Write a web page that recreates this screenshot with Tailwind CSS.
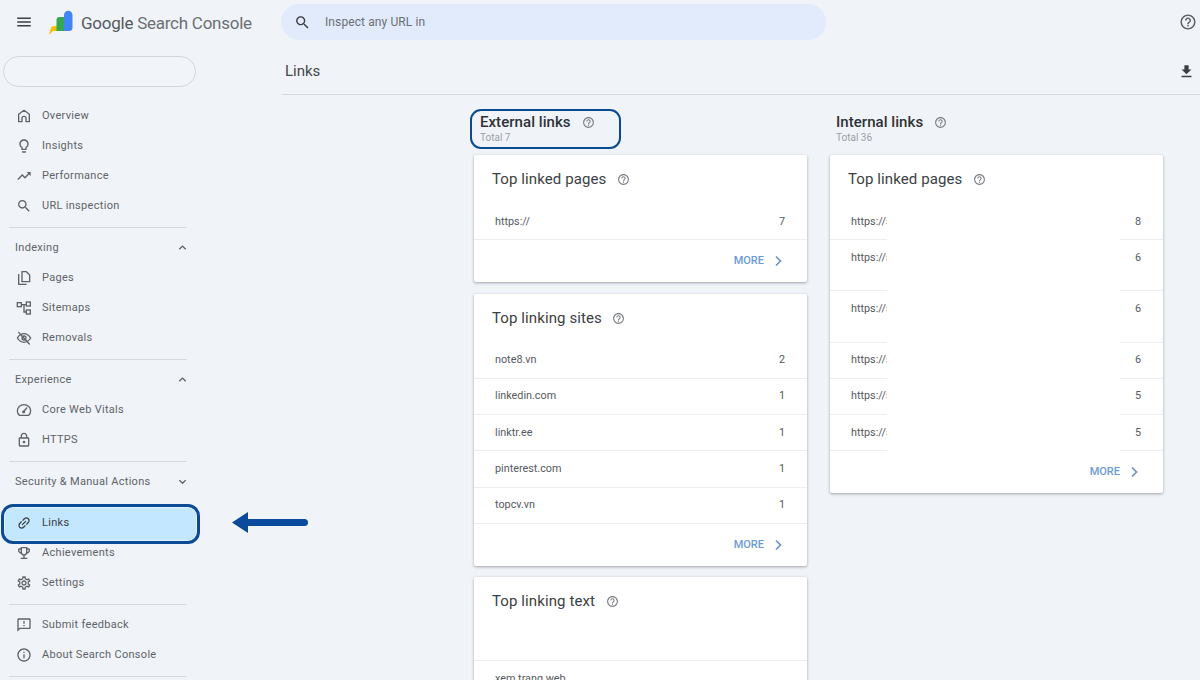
<!DOCTYPE html>
<html lang="en">
<head>
<meta charset="utf-8">
<title>Links - Google Search Console</title>
<script src="https://cdn.jsdelivr.net/npm/@tailwindcss/browser@4"></script>
</head>
<body class="m-0">
<svg width="0" height="0" class="absolute">
  <defs>
    <symbol id="i-menu" viewBox="0 0 24 24"><path fill="currentColor" d="M3 18h18v-2H3v2zm0-5h18v-2H3v2zm0-7v2h18V6H3z"/></symbol>
    <symbol id="i-search" viewBox="0 0 24 24"><path fill="currentColor" d="M15.5 14h-.79l-.28-.27C15.41 12.59 16 11.11 16 9.5 16 5.91 13.09 3 9.5 3S3 5.91 3 9.5 5.91 16 9.5 16c1.61 0 3.09-.59 4.23-1.57l.27.28v.79l5 4.99L20.49 19l-4.99-5zm-6 0C7.01 14 5 11.99 5 9.5S7.01 5 9.5 5 14 7.01 14 9.5 11.99 14 9.5 14z"/></symbol>
    <symbol id="i-help" viewBox="0 0 24 24"><path fill="currentColor" d="M11 18h2v-2h-2v2zm1-16C6.48 2 2 6.48 2 12s4.48 10 10 10 10-4.48 10-10S17.52 2 12 2zm0 18c-4.41 0-8-3.59-8-8s3.59-8 8-8 8 3.59 8 8-3.59 8-8 8zm0-14c-2.21 0-4 1.79-4 4h2c0-1.1.9-2 2-2s2 .9 2 2c0 2-3 1.75-3 5h2c0-2.25 3-2.5 3-5 0-2.21-1.79-4-4-4z"/></symbol>
    <symbol id="i-download" viewBox="0 0 24 24"><path fill="currentColor" d="M19 9h-4V3H9v6H5l7 7 7-7zM5 18v2h14v-2H5z"/></symbol>
    <symbol id="i-home" viewBox="0 0 24 24"><path fill="none" stroke="currentColor" stroke-width="2" stroke-linejoin="round" d="M12 3.5 4 9.5V20.5H9V15.5a3 3 0 0 1 6 0V20.5H20V9.5z"/></symbol>
    <symbol id="i-bulb" viewBox="0 0 24 24"><path fill="currentColor" d="M9 21c0 .55.45 1 1 1h4c.55 0 1-.45 1-1v-1H9v1zm3-19C8.14 2 5 5.14 5 9c0 2.38 1.19 4.47 3 5.74V17c0 .55.45 1 1 1h6c.55 0 1-.45 1-1v-2.26c1.81-1.27 3-3.36 3-5.74 0-3.86-3.14-7-7-7zm2.85 11.1l-.85.6V16h-4v-2.3l-.85-.6C7.8 12.16 7 10.63 7 9c0-2.76 2.24-5 5-5s5 2.24 5 5c0 1.63-.8 3.16-2.15 4.1z"/></symbol>
    <symbol id="i-trend" viewBox="0 0 24 24"><path fill="currentColor" d="M16 6l2.29 2.29-4.88 4.88-4-4L2 16.59 3.41 18l6-6 4 4 6.3-6.29L22 12V6z"/></symbol>
    <symbol id="i-pages" viewBox="0 0 24 24"><path fill="none" stroke="currentColor" stroke-width="2" stroke-linejoin="round" d="M4 6V21.5H16M9 2.5H15.5L20.5 7.5V17.5H9z"/></symbol>
    <symbol id="i-sitemap" viewBox="0 0 24 24"><g fill="none" stroke="currentColor" stroke-width="2"><rect x="2" y="4" width="6" height="6"/><rect x="15.5" y="3" width="6" height="6"/><rect x="15.5" y="15" width="6" height="6"/><path d="M8 7H15.5M12 7V18H15.5"/></g></symbol>
    <symbol id="i-eyeoff" viewBox="0 0 24 24"><g fill="none" stroke="currentColor" stroke-width="2" stroke-linecap="round"><path d="M2 12C5 7.5 8.5 5.5 12 5.5S19 7.5 22 12C19 16.5 15.5 18.5 12 18.5S5 16.5 2 12z"/><path d="M4 3.5 20 21"/><circle cx="12" cy="12" r="3"/></g></symbol>
    <symbol id="i-speed" viewBox="0 0 24 24"><g fill="none" stroke="currentColor" stroke-width="2" stroke-linecap="round"><path d="M5 20H19C21 18 22 15.5 22 13A10 9 0 0 0 12 4 10 9 0 0 0 2 13C2 15.5 3 18 5 20z"/><path d="M11 15 16 9"/><circle cx="11.5" cy="15" r="1.2"/></g></symbol>
    <symbol id="i-lock" viewBox="0 0 24 24"><path fill="currentColor" d="M18 8h-1V6c0-2.76-2.24-5-5-5S7 3.24 7 6v2H6c-1.1 0-2 .9-2 2v10c0 1.1.9 2 2 2h12c1.1 0 2-.9 2-2V10c0-1.1-.9-2-2-2zM9 6c0-1.66 1.34-3 3-3s3 1.34 3 3v2H9V6zm9 14H6V10h12v10zm-6-3c1.1 0 2-.9 2-2s-.9-2-2-2-2 .9-2 2 .9 2 2 2z"/></symbol>
    <symbol id="i-link" viewBox="0 0 24 24"><path fill="currentColor" transform="rotate(-45 12 12)" d="M3.9 12c0-1.71 1.39-3.1 3.1-3.1h4V7H7c-2.76 0-5 2.24-5 5s2.24 5 5 5h4v-1.9H7c-1.71 0-3.1-1.39-3.1-3.1zM8 13h8v-2H8v2zm9-6h-4v1.9h4c1.71 0 3.1 1.39 3.1 3.1s-1.39 3.1-3.1 3.1h-4V17h4c2.76 0 5-2.24 5-5s-2.24-5-5-5z"/></symbol>
    <symbol id="i-trophy" viewBox="0 0 24 24"><path fill="currentColor" d="M19 5h-2V3H7v2H5c-1.1 0-2 .9-2 2v1c0 2.55 1.92 4.63 4.39 4.94.63 1.5 1.98 2.63 3.61 2.96V19H7v2h10v-2h-4v-3.1c1.63-.33 2.98-1.46 3.61-2.96C19.08 12.63 21 10.55 21 8V7c0-1.1-.9-2-2-2zM5 8V7h2v3.82C5.84 10.4 5 9.3 5 8zm7 6c-1.65 0-3-1.35-3-3V5h6v6c0 1.65-1.35 3-3 3zm7-6c0 1.3-.84 2.4-2 2.82V7h2v1z"/></symbol>
    <symbol id="i-gear" viewBox="0 0 24 24"><path fill="currentColor" d="M19.43 12.98c.04-.32.07-.64.07-.98 0-.34-.03-.66-.07-.98l2.11-1.65c.19-.15.24-.42.12-.64l-2-3.46c-.09-.16-.26-.25-.44-.25-.06 0-.12.01-.17.03l-2.49 1c-.52-.4-1.08-.73-1.69-.98l-.38-2.65C14.46 2.18 14.25 2 14 2h-4c-.25 0-.46.18-.49.42l-.38 2.65c-.61.25-1.17.59-1.69.98l-2.49-1c-.06-.02-.12-.03-.18-.03-.17 0-.34.09-.43.25l-2 3.46c-.13.22-.07.49.12.64l2.11 1.65c-.04.32-.07.65-.07.98 0 .33.03.66.07.98l-2.11 1.65c-.19.15-.24.42-.12.64l2 3.46c.09.16.26.25.44.25.06 0 .12-.01.17-.03l2.49-1c.52.4 1.08.73 1.69.98l.38 2.65c.03.24.24.42.49.42h4c.25 0 .46-.18.49-.42l.38-2.65c.61-.25 1.17-.59 1.69-.98l2.49 1c.06.02.12.03.18.03.17 0 .34-.09.43-.25l2-3.46c.12-.22.07-.49-.12-.64l-2.11-1.65zm-1.98-1.71c.04.31.05.52.05.73 0 .21-.02.43-.05.73l-.14 1.13.89.7 1.08.84-.7 1.21-1.27-.51-1.04-.42-.9.68c-.43.32-.84.56-1.25.73l-1.06.43-.16 1.13-.2 1.35h-1.4l-.19-1.35-.16-1.13-1.06-.43c-.43-.18-.83-.41-1.23-.71l-.91-.7-1.06.43-1.27.51-.7-1.21 1.08-.84.89-.7-.14-1.13c-.03-.31-.05-.54-.05-.74s.02-.43.05-.73l.14-1.13-.89-.7-1.08-.84.7-1.21 1.27.51 1.04.42.9-.68c.43-.32.84-.56 1.25-.73l1.06-.43.16-1.13.2-1.35h1.39l.19 1.35.16 1.13 1.06.43c.43.18.83.41 1.23.71l.91.7 1.06-.43 1.27-.51.7 1.21-1.07.85-.89.7.14 1.13zM12 8c-2.21 0-4 1.79-4 4s1.79 4 4 4 4-1.79 4-4-1.79-4-4-4zm0 6c-1.1 0-2-.9-2-2s.9-2 2-2 2 .9 2 2-.9 2-2 2z"/></symbol>
    <symbol id="i-feedback" viewBox="0 0 24 24"><path fill="currentColor" d="M20 2H4c-1.1 0-1.99.9-1.99 2L2 22l4-4h14c1.1 0 2-.9 2-2V4c0-1.1-.9-2-2-2zm0 14H5.17L4 17.17V4h16v12zM11 12h2v2h-2zm0-6h2v4h-2z"/></symbol>
    <symbol id="i-info" viewBox="0 0 24 24"><path fill="currentColor" d="M11 7h2v2h-2zm0 4h2v6h-2zm1-9C6.48 2 2 6.48 2 12s4.48 10 10 10 10-4.48 10-10S17.52 2 12 2zm0 18c-4.41 0-8-3.59-8-8s3.59-8 8-8 8 3.59 8 8-3.59 8-8 8z"/></symbol>
    <symbol id="i-up" viewBox="0 0 24 24"><path fill="none" stroke="currentColor" stroke-width="3" d="M5 16 12 9 19 16"/></symbol>
    <symbol id="i-down" viewBox="0 0 24 24"><path fill="none" stroke="currentColor" stroke-width="3" d="M5 9 12 16 19 9"/></symbol>
    <symbol id="i-right" viewBox="0 0 24 24"><path fill="none" stroke="currentColor" stroke-width="3.4" d="M8 3 17 12 8 21"/></symbol>
  </defs>
</svg>

<div class="relative w-[1200px] h-[680px] overflow-hidden bg-[#f0f4f9] font-['Roboto',sans-serif] text-[#5f6368]">

  <!-- Top bar -->
  <header class="flex items-center h-[44px]">
    <div class="flex items-center w-[281px] shrink-0">
      <svg class="w-[18px] h-[18px] ml-[15px] text-[#3c4043]"><use href="#i-menu"/></svg>
      <svg class="w-[26px] h-[26px] ml-[15px] mt-[2px]" viewBox="0 0 26 26">
        <path fill="#fbbc04" d="M1 25 3 18a3 3 0 0 1 3-2H10V21H5z"/>
        <path fill="#34a853" d="M8.5 10a3 3 0 0 1 3-3H18V21H8.500z"/>
        <path fill="#4285f4" d="M16 5a4 4 0 0 1 8.500 0V17.500a3.500 3.500 0 0 1-3.500 3.500H16z"/>
      </svg>
      <span class="ml-[7px] mt-[3px] text-[17px] leading-none tracking-[-0.25px] text-[#6b6f74] whitespace-nowrap"><span class="text-[#55595e]">Google</span> Search Console</span>
    </div>
    <div class="flex items-center w-[545px] h-[36px] rounded-full bg-[#e1ebfb] pl-[13px]">
      <svg class="w-[17px] h-[17px] text-[#3c4043]"><use href="#i-search"/></svg>
      <span class="ml-[14px] text-[12px] tracking-[0.1px] text-[#6b7075]">Inspect any URL in</span>
    </div>
    <svg class="w-[18px] h-[18px] ml-auto mr-[3px] text-[#5f6368]"><use href="#i-help"/></svg>
  </header>

  <div class="flex">
    <!-- Sidebar -->
    <aside class="w-[282px] shrink-0 text-[11px] tracking-[0.3px]">
      <div class="ml-[3px] mt-[12px] w-[193px] h-[31px] rounded-full border border-[#d3d7dc] bg-[#f1f4f9]"></div>

      <nav class="w-[187px] mt-[14px]">
        <a class="flex items-center h-[30px] pl-[16px]"><svg class="w-[16px] h-[16px]"><use href="#i-home"/></svg><span class="ml-[10px]">Overview</span></a>
        <a class="flex items-center h-[30px] pl-[16px]"><svg class="w-[16px] h-[16px]"><use href="#i-bulb"/></svg><span class="ml-[10px]">Insights</span></a>
        <a class="flex items-center h-[30px] pl-[16px]"><svg class="w-[16px] h-[16px]"><use href="#i-trend"/></svg><span class="ml-[10px]">Performance</span></a>
        <a class="flex items-center h-[30px] pl-[16px]"><svg class="w-[16px] h-[16px]"><use href="#i-search"/></svg><span class="ml-[10px]">URL inspection</span></a>
        <div class="ml-[9px] mt-[6px] h-px bg-[#d5d9de]"></div>

        <div class="flex items-center justify-between h-[40px] pl-[15px]"><span>Indexing</span><svg class="w-[11px] h-[11px] -mr-[0.5px] -mt-[1px]"><use href="#i-up"/></svg></div>
        <a class="-mt-[5px] flex items-center h-[30px] pl-[16px]"><svg class="w-[16px] h-[16px]"><use href="#i-pages"/></svg><span class="ml-[10px]">Pages</span></a>
        <a class="flex items-center h-[30px] pl-[16px]"><svg class="w-[16px] h-[16px]"><use href="#i-sitemap"/></svg><span class="ml-[10px]">Sitemaps</span></a>
        <a class="flex items-center h-[30px] pl-[16px]"><svg class="w-[16px] h-[16px]"><use href="#i-eyeoff"/></svg><span class="ml-[10px]">Removals</span></a>
        <div class="ml-[9px] mt-[6px] h-px bg-[#d5d9de]"></div>

        <div class="flex items-center justify-between h-[40px] pl-[15px]"><span>Experience</span><svg class="w-[11px] h-[11px] -mr-[0.5px] -mt-[1px]"><use href="#i-up"/></svg></div>
        <a class="-mt-[5px] flex items-center h-[30px] pl-[16px]"><svg class="w-[16px] h-[16px]"><use href="#i-speed"/></svg><span class="ml-[10px]">Core Web Vitals</span></a>
        <a class="flex items-center h-[30px] pl-[16px]"><svg class="w-[16px] h-[16px]"><use href="#i-lock"/></svg><span class="ml-[10px]">HTTPS</span></a>
        <div class="ml-[9px] mt-[6px] h-px bg-[#d5d9de]"></div>

        <div class="flex items-center justify-between h-[40px] pl-[15px]"><span class="whitespace-nowrap">Security &amp; Manual Actions</span><svg class="w-[11px] h-[11px] -mr-[0.5px] -mt-[1px]"><use href="#i-down"/></svg></div>

        <a class="relative mt-[6px] flex items-center h-[30px] pl-[16px] text-[#3c4043]">
          <span class="absolute left-[1px] top-[-4px] w-[199px] h-[40px] rounded-[12px] border-[3px] border-[#0a4a97] bg-[#c2e7ff] shadow-[inset_0_0_0_1px_#e3f2fd]"></span>
          <svg class="relative w-[16px] h-[16px]"><use href="#i-link"/></svg><span class="relative ml-[10px]">Links</span>
        </a>
        <a class="flex items-center h-[30px] pl-[16px]"><svg class="w-[16px] h-[16px]"><use href="#i-trophy"/></svg><span class="ml-[10px]">Achievements</span></a>
        <a class="flex items-center h-[30px] pl-[16px]"><svg class="w-[16px] h-[16px]"><use href="#i-gear"/></svg><span class="ml-[10px]">Settings</span></a>
        <div class="ml-[9px] mt-[6px] mb-[5px] h-px bg-[#d5d9de]"></div>

        <a class="flex items-center h-[30px] pl-[16px]"><svg class="w-[16px] h-[16px]"><use href="#i-feedback"/></svg><span class="ml-[10px]">Submit feedback</span></a>
        <a class="flex items-center h-[30px] pl-[16px]"><svg class="w-[16px] h-[16px]"><use href="#i-info"/></svg><span class="ml-[10px]">About Search Console</span></a>
        <div class="ml-[9px] mt-[6px] h-px bg-[#d5d9de]"></div>
      </nav>
    </aside>

    <!-- Main -->
    <main class="flex-1 min-w-0">
      <div class="flex items-center justify-between h-[51px] pt-[4px] pl-[3px] pr-[5px] border-b border-[#d5d9de]">
        <h1 class="text-[15px] font-normal text-[#44484d]">Links</h1>
        <svg class="w-[17px] h-[17px] text-[#3c4043]"><use href="#i-download"/></svg>
      </div>

      <div class="flex gap-[23px] pl-[192px]">
        <!-- External -->
        <section class="relative w-[333px] shrink-0">
          <span class="absolute left-[-4px] top-[14px] w-[151px] h-[40px] rounded-[11px] border-[2.5px] border-[#0a4a8f]"></span>
          <div class="h-[60px] pl-[6px] pt-[18px]">
            <div class="flex items-center h-[18px]"><h2 class="text-[15px] font-medium leading-none text-[#2f3236] tracking-[0.05px]">External links</h2><svg class="w-[13px] h-[13px] ml-[11px] text-[#777b80]"><use href="#i-help"/></svg></div>
            <p class="text-[10px] leading-[14px] text-[#9aa0a6]">Total 7</p>
          </div>

          <div class="bg-white rounded-[2px] shadow-[0_1px_3px_rgba(60,64,67,0.45)]">
            <div class="flex items-center h-[48px] mb-[2px] pl-[18px] text-[15px] tracking-[0.1px] text-[#3c4043]">Top linked pages<svg class="w-[13px] h-[13px] ml-[11px] text-[#777b80]"><use href="#i-help"/></svg></div>
            <div class="flex items-center justify-between h-[35px] pl-[21px] pr-[22px] text-[10.8px] text-[#55595e] border-b border-[#eceef0]"><span>https://</span><span>7</span></div>
            <div class="flex items-center justify-end h-[42px] pr-[23px] text-[11px] font-medium text-[#6b9bd6]"><span class="mt-[1px]">MORE</span><svg class="w-[12px] h-[12px] ml-[8px] text-[#6f93c4]"><use href="#i-right"/></svg></div>
          </div>

          <div class="mt-[12px] bg-white rounded-[2px] shadow-[0_1px_3px_rgba(60,64,67,0.45)]">
            <div class="flex items-center h-[48px] pl-[18px] text-[15px] tracking-[0.1px] text-[#3c4043]">Top linking sites<svg class="w-[13px] h-[13px] ml-[10px] text-[#777b80]"><use href="#i-help"/></svg></div>
            <div class="pt-[0.4px] text-[10.8px] text-[#55595e]">
              <div class="flex items-center justify-between h-[36.3px] pl-[21px] pr-[22px] border-b border-[#eceef0]"><span>note8.vn</span><span>2</span></div>
              <div class="flex items-center justify-between h-[36.3px] pl-[21px] pr-[22px] border-b border-[#eceef0]"><span>linkedin.com</span><span>1</span></div>
              <div class="flex items-center justify-between h-[36.3px] pl-[21px] pr-[22px] border-b border-[#eceef0]"><span>linktr.ee</span><span>1</span></div>
              <div class="flex items-center justify-between h-[36.3px] pl-[21px] pr-[22px] border-b border-[#eceef0]"><span>pinterest.com</span><span>1</span></div>
              <div class="flex items-center justify-between h-[36.3px] pl-[21px] pr-[22px] border-b border-[#eceef0]"><span>topcv.vn</span><span>1</span></div>
            </div>
            <div class="flex items-center justify-end h-[42.5px] pr-[23px] text-[11px] font-medium text-[#6b9bd6]"><span>MORE</span><svg class="w-[12px] h-[12px] ml-[8px] text-[#6f93c4]"><use href="#i-right"/></svg></div>
          </div>

          <div class="mt-[11px] h-[200px] bg-white rounded-[2px] shadow-[0_1px_3px_rgba(60,64,67,0.45)]">
            <div class="flex items-center h-[48px] pl-[18px] text-[15px] tracking-[0.1px] text-[#3c4043]">Top linking text<svg class="w-[13px] h-[13px] ml-[11px] text-[#777b80]"><use href="#i-help"/></svg></div>
            <div class="h-[36px] border-b border-[#eceef0]"></div>
            <div class="flex items-center justify-between h-[36px] pl-[21px] pr-[22px] text-[10.8px] text-[#55595e]"><span>xem trang web</span></div>
          </div>
        </section>

        <!-- Internal -->
        <section class="w-[333px] shrink-0">
          <div class="h-[60px] pl-[6px] pt-[18px]">
            <div class="flex items-center h-[18px]"><h2 class="text-[15px] font-medium leading-none text-[#2f3236] tracking-[0.05px]">Internal links</h2><svg class="w-[13px] h-[13px] ml-[11px] text-[#777b80]"><use href="#i-help"/></svg></div>
            <p class="text-[10px] leading-[14px] text-[#9aa0a6]">Total 36</p>
          </div>

          <div class="relative bg-white rounded-[2px] shadow-[0_1px_3px_rgba(60,64,67,0.45)]">
            <div class="flex items-center h-[48px] mb-[2px] pl-[18px] text-[15px] tracking-[0.1px] text-[#3c4043]">Top linked pages<svg class="w-[13px] h-[13px] ml-[11px] text-[#777b80]"><use href="#i-help"/></svg></div>
            <div class="text-[10.8px] text-[#55595e]">
              <div class="flex items-center justify-between h-[35px] pl-[21px] pr-[22px] border-b border-[#eceef0]"><span>https://s</span><span>8</span></div>
              <div class="flex justify-between h-[51.3px] pt-[10px] pl-[21px] pr-[22px] border-b border-[#eceef0]"><span>https://s</span><span>6</span></div>
              <div class="flex justify-between h-[51.3px] pt-[10px] pl-[21px] pr-[22px] border-b border-[#eceef0]"><span>https://s</span><span>6</span></div>
              <div class="flex items-center justify-between h-[36.3px] pl-[21px] pr-[22px] border-b border-[#eceef0]"><span>https://s</span><span>6</span></div>
              <div class="flex items-center justify-between h-[36.3px] pl-[21px] pr-[22px] border-b border-[#eceef0]"><span>https://s</span><span>5</span></div>
              <div class="flex items-center justify-between h-[36.3px] pl-[21px] pr-[22px] border-b border-[#eceef0]"><span>https://s</span><span>5</span></div>
            </div>
            <div class="flex items-center justify-end h-[41.5px] pr-[23px] text-[11px] font-medium text-[#6b9bd6]"><span>MORE</span><svg class="w-[12px] h-[12px] ml-[8px] text-[#6f93c4]"><use href="#i-right"/></svg></div>
            <span class="absolute left-[57px] top-[50px] w-[233px] h-[246px] bg-white"></span>
          </div>
        </section>
      </div>
    </main>
  </div>

  <!-- Annotation arrow -->
  <svg class="absolute left-[232px] top-[511px] w-[78px] h-[24px] text-[#0a4a9c]" viewBox="0 0 78 24">
    <path fill="currentColor" d="M0 11.500 16 1V8H72.500a3.500 3.500 0 0 1 0 7H16V22z"/>
  </svg>
</div>
</body>
</html>
